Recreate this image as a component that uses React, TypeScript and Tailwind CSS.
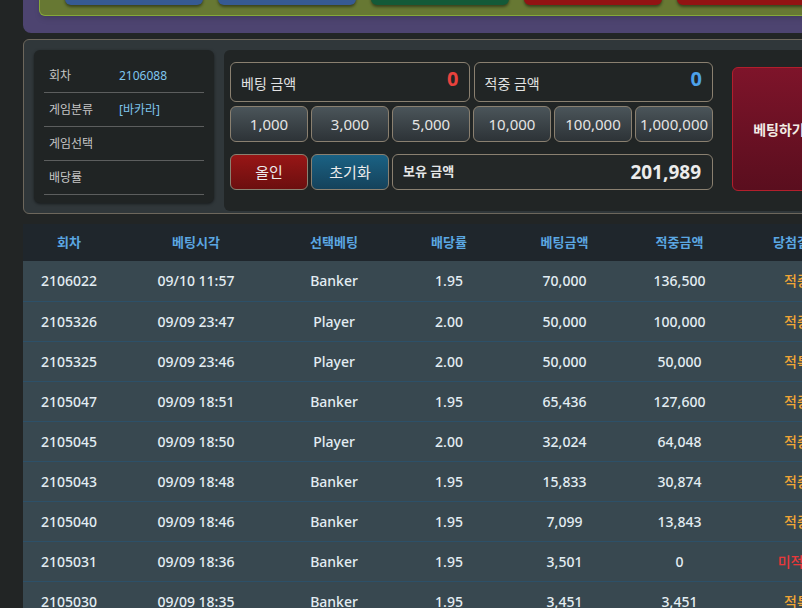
import React from 'react';

const rows = [
  ['2106022', '09/10 11:57', 'Banker', '1.95', '70,000', '136,500', '적중'],
  ['2105326', '09/09 23:47', 'Player', '2.00', '50,000', '100,000', '적중'],
  ['2105325', '09/09 23:46', 'Player', '2.00', '50,000', '50,000', '적특'],
  ['2105047', '09/09 18:51', 'Banker', '1.95', '65,436', '127,600', '적중'],
  ['2105045', '09/09 18:50', 'Player', '2.00', '32,024', '64,048', '적중'],
  ['2105043', '09/09 18:48', 'Banker', '1.95', '15,833', '30,874', '적중'],
  ['2105040', '09/09 18:46', 'Banker', '1.95', '7,099', '13,843', '적중'],
  ['2105031', '09/09 18:36', 'Banker', '1.95', '3,501', '0', '미적중'],
  ['2105030', '09/09 18:35', 'Banker', '1.95', '3,451', '3,451', '적특'],
];

const chips = ['1,000', '3,000', '5,000', '10,000', '100,000', '1,000,000'];

const info = [
  { label: '회차', value: '2106088' },
  { label: '게임분류', value: '[바카라]' },
  { label: '게임선택', value: '' },
  { label: '배당률', value: '' },
];

const headers = ['회차', '베팅시각', '선택베팅', '배당률', '베팅금액', '적중금액', '당첨결과'];

const resultColor = (r: string) => (r === '미적중' ? 'text-[#e8383a]' : 'text-[#f0a535]');

export default function App() {
  return (
    <div
      className="min-h-screen w-[802px] h-[608px] overflow-hidden bg-[#222525] pl-[23px]"
      style={{ fontFamily: '"Noto Sans", "Noto Sans CJK KR", sans-serif' }}
    >
      <div className="w-[900px]">
        {/* GAME TYPE BAR (scrolled off top) */}
        <div className="h-[33px] bg-[#4d4470] rounded-bl-lg pl-4 pb-[17px] flex flex-col justify-end overflow-hidden">
          <div className="bg-[#677833] border border-[#85a83a] border-t-0 rounded-bl-md pl-[25px] pb-[10px] flex gap-[15px] shadow-md">
            <div className="w-[138px] h-[20px] rounded-md bg-[#365a93] shadow-[0_2px_3px_rgba(0,0,0,0.45)]" />
            <div className="w-[138px] h-[20px] rounded-md bg-[#365a93] shadow-[0_2px_3px_rgba(0,0,0,0.45)]" />
            <div className="w-[138px] h-[20px] rounded-md bg-[#145a38] shadow-[0_2px_3px_rgba(0,0,0,0.45)]" />
            <div className="w-[138px] h-[20px] rounded-md bg-[#921313] shadow-[0_2px_3px_rgba(0,0,0,0.45)]" />
            <div className="w-[138px] h-[20px] rounded-md bg-[#921313] shadow-[0_2px_3px_rgba(0,0,0,0.45)]" />
          </div>
        </div>

        {/* BET PANEL */}
        <div className="mt-[6px] h-[175px] border border-[#6d675c] rounded-md bg-[#30373a] pt-[10px] pl-[10px] flex items-start gap-[10px]">
          <div className="w-[180px] h-[153px] rounded-md bg-[#202424] shadow-[0_1px_3px_rgba(0,0,0,0.5)] px-[10px] pt-[9px]">
            {info.map((it) => (
              <div key={it.label} className="h-[34px] border-b border-[#5c5e5e] flex items-center pl-[5px] text-[12px]">
                <span className="w-[70px] text-[#c6c6c6]">{it.label}</span>
                <span className="text-[#7ec6ee]">{it.value}</span>
              </div>
            ))}
          </div>

          <div className="w-[660px] h-[161px] rounded-md bg-[#212525] pl-[6px] pt-[12px] flex items-start">
            <div className="w-[483px]">
              <div className="flex gap-[4px]">
                <div className="flex-1 h-[40px] border border-[#8a8070] rounded-md flex justify-between px-[10px]">
                  <span className="text-[14px] text-[#e2e2e2] self-center pt-[3px]">베팅 금액</span>
                  <span className="text-[20px] font-bold text-[#e8423d] leading-none pt-[6px]">0</span>
                </div>
                <div className="flex-1 h-[40px] border border-[#8a8070] rounded-md flex justify-between px-[10px]">
                  <span className="text-[14px] text-[#e2e2e2] self-center pt-[3px]">적중 금액</span>
                  <span className="text-[20px] font-bold text-[#4da2ea] leading-none pt-[6px]">0</span>
                </div>
              </div>

              <div className="mt-[4px] grid grid-cols-6 gap-[3px]">
                {chips.map((c) => (
                  <button
                    key={c}
                    className="h-[36px] border border-[#8a8070] rounded-md bg-gradient-to-b from-[#4b555a] to-[#2d3337] text-[15px] text-[#e4e4e4]"
                  >
                    {c}
                  </button>
                ))}
              </div>

              <div className="mt-[12px] flex gap-[3px]">
                <button className="w-[78px] h-[36px] border border-[#8a8070] rounded-md bg-gradient-to-b from-[#981616] to-[#6c0f0f] text-[15px] text-[#ececec]">
                  올인
                </button>
                <button className="w-[78px] h-[36px] border border-[#8a8070] rounded-md bg-gradient-to-b from-[#1a6284] to-[#15425b] text-[15px] text-[#ececec]">
                  초기화
                </button>
                <div className="flex-1 h-[36px] border border-[#8a8070] rounded-md bg-[#232727] flex items-center justify-between pl-[10px] pr-[11px]">
                  <span className="text-[13px] font-bold text-[#e6e6e6]">보유 금액</span>
                  <span className="text-[19px] font-bold text-[#ececec]">201,989</span>
                </div>
              </div>
            </div>

            <button className="ml-[19px] mt-[5px] w-[94px] h-[124px] rounded-md border border-[#b21f2c] bg-gradient-to-b from-[#7e142a] to-[#5a0e1e] text-[14px] font-bold text-[#f2ece4]">
              베팅하기
            </button>
          </div>
        </div>

        {/* HISTORY TABLE */}
        <table className="mt-[10px] table-fixed border-collapse w-[834px]">
          <colgroup>
            <col className="w-[92px]" />
            <col className="w-[162px]" />
            <col className="w-[114px]" />
            <col className="w-[116px]" />
            <col className="w-[115px]" />
            <col className="w-[115px]" />
            <col className="w-[120px]" />
          </colgroup>
          <thead>
            <tr className="h-[37px] bg-[#1f262c]">
              {headers.map((h) => (
                <th key={h} className="text-[13px] font-bold text-[#5ba7e2] text-center">
                  {h}
                </th>
              ))}
            </tr>
          </thead>
          <tbody>
            {rows.map((r) => (
              <tr key={r[0]} className="h-[40px] bg-[#384850] border-b border-[#2d5068]">
                {r.map((cell, i) => (
                  <td
                    key={i}
                    className={`p-0 text-[14px] text-center font-medium ${i === 6 ? resultColor(cell) : 'text-[#e3edf3]'}`}
                  >
                    {cell}
                  </td>
                ))}
              </tr>
            ))}
          </tbody>
        </table>
      </div>
    </div>
  );
}
